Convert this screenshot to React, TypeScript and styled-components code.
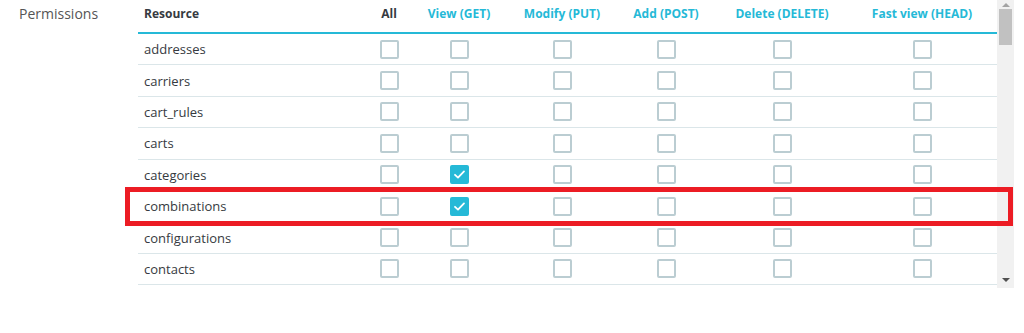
import styled, { createGlobalStyle } from "styled-components";

const GlobalStyle = createGlobalStyle`
  body {
    margin: 0;
    background: #ffffff;
    font-family: "Open Sans", "Liberation Sans", sans-serif;
    color: #363a41;
  }
`;

const columns = "216px 70px 70px 136px 72px 160px 120px";

const Page = styled.div`
  position: relative;
  display: flex;
  height: 333px;
`;

const Label = styled.div`
  width: 119px;
  padding: 4px 0 0 19px;
  font-size: 14px;
  color: #555555;
`;

const TableFrame = styled.div`
  display: flex;
  height: 288px;
`;

const TableBody = styled.div`
  width: 859px;
  overflow: hidden;
`;

const ScrollBar = styled.div`
  display: flex;
  flex-direction: column;
  align-items: center;
  width: 17px;
  background: #f1f1f1;
`;

const Arrow = styled.span<{ $down?: boolean }>`
  margin: ${(p) => (p.$down ? "auto 0 6px" : "3px 0 2px")};
  border-left: 4px solid transparent;
  border-right: 4px solid transparent;
  border-top: ${(p) => (p.$down ? "4px solid #505050" : "0")};
  border-bottom: ${(p) => (p.$down ? "0" : "4px solid #a3a3a3")};
`;

const Thumb = styled.span`
  width: 13px;
  height: 36px;
  background: #c1c1c1;
`;

const HeadRow = styled.div`
  display: grid;
  grid-template-columns: ${columns};
  height: 34px;
  box-sizing: border-box;
  border-bottom: 2px solid #25b9d7;
  padding-right: 15px;
`;

const HeadCell = styled.div<{ $method?: boolean; $left?: boolean }>`
  padding-top: 5px;
  padding-left: ${(p) => (p.$left ? "6px" : "0")};
  text-align: ${(p) => (p.$left ? "left" : "center")};
  font-size: 12px;
  font-weight: 700;
  color: ${(p) => (p.$method ? "#25b9d7" : "#363a41")};
  white-space: nowrap;
`;

const Row = styled.div`
  display: grid;
  grid-template-columns: ${columns};
  align-items: center;
  height: 31.4px;
  box-sizing: border-box;
  border-bottom: 1px solid #dbe6e9;
  padding-right: 15px;
`;

const Name = styled.div`
  padding-left: 6px;
  font-size: 13px;
  color: #363a41;
`;

const Cell = styled.div`
  display: flex;
  justify-content: center;
`;

const Box = styled.span<{ $checked?: boolean }>`
  display: flex;
  align-items: center;
  justify-content: center;
  width: 19px;
  height: 19px;
  box-sizing: border-box;
  border-radius: 2px;
  border: 2px solid ${(p) => (p.$checked ? "#25b9d7" : "#bbcdd2")};
  background: ${(p) => (p.$checked ? "#25b9d7" : "#ffffff")};
`;

const Highlight = styled.div`
  position: absolute;
  left: 125px;
  top: 187px;
  width: 888px;
  height: 39px;
  box-sizing: border-box;
  border: 5px solid #ec1c24;
  pointer-events: none;
`;

const methods = ["View (GET)", "Modify (PUT)", "Add (POST)", "Delete (DELETE)", "Fast view (HEAD)"];

const resources = [
  "addresses", "carriers", "cart_rules", "carts", "categories", "combinations", "configurations", "contacts",
];

const checked: Record<string, number[]> = {
  categories: [1],
  combinations: [1],
};

function Check({ on }: { on: boolean }) {
  return (
    <Box $checked={on}>
      {on && (
        <svg width="13" height="13" viewBox="0 0 13 13">
          <polyline points="2,6.8 5,9.6 11,3.4" fill="none" stroke="#ffffff" strokeWidth="1.8" strokeLinecap="round" strokeLinejoin="round" />
        </svg>
      )}
    </Box>
  );
}

export default function App() {
  return (
    <>
      <GlobalStyle />
      <Page>
        <Label>Permissions</Label>
        <TableFrame>
          <TableBody>
            <HeadRow>
              <HeadCell $left>Resource</HeadCell>
              <HeadCell>All</HeadCell>
              {methods.map((m) => (
                <HeadCell key={m} $method>
                  {m}
                </HeadCell>
              ))}
            </HeadRow>
            {resources.map((r) => (
              <Row key={r}>
                <Name>{r}</Name>
                {[0, 1, 2, 3, 4, 5].map((i) => (
                  <Cell key={i}>
                    <Check on={(checked[r] || []).includes(i)} />
                  </Cell>
                ))}
              </Row>
            ))}
          </TableBody>
          <ScrollBar>
            <Arrow />
            <Thumb />
            <Arrow $down />
          </ScrollBar>
        </TableFrame>
        <Highlight />
      </Page>
    </>
  );
}
